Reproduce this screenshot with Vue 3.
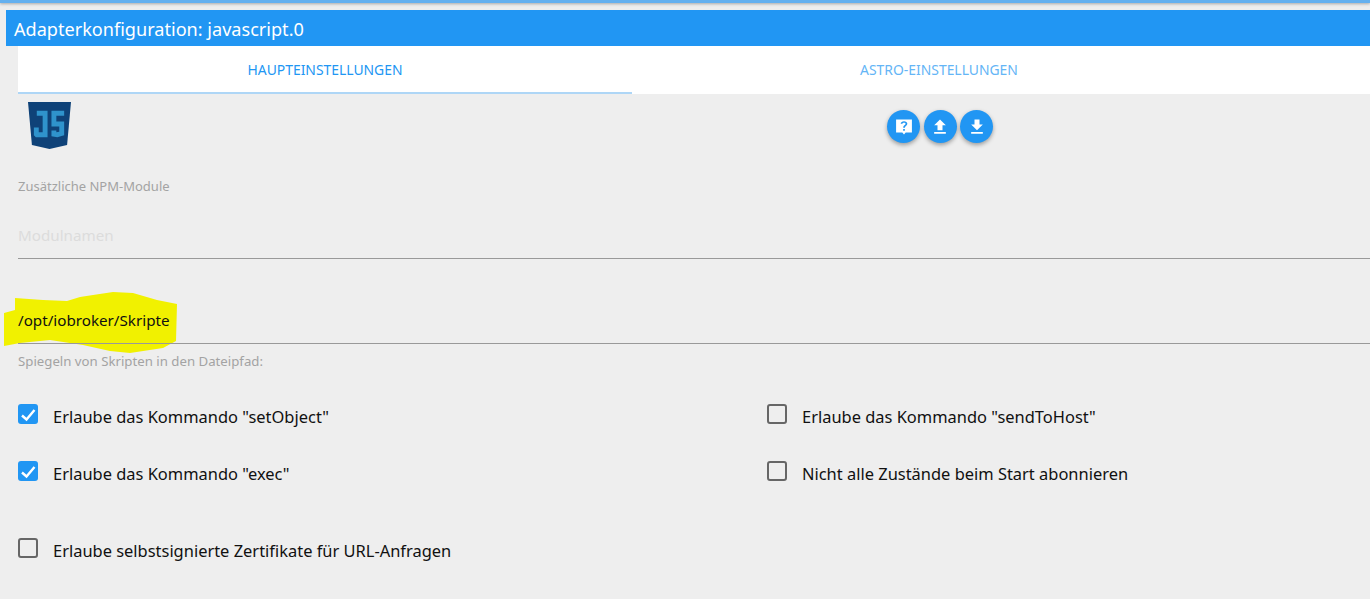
<script setup>
const rows = [
  { left: { text: 'Erlaube das Kommando "setObject"', on: true }, right: { text: 'Erlaube das Kommando "sendToHost"', on: false } },
  { left: { text: 'Erlaube das Kommando "exec"', on: true }, right: { text: 'Nicht alle Zustände beim Start abonnieren', on: false } },
]
</script>

<template>
  <div class="page">
    <div class="topbar"></div>
    <header class="title">Adapterkonfiguration: javascript.0</header>
    <main class="content">
      <nav class="tabs">
        <div class="tab active">HAUPTEINSTELLUNGEN</div>
        <div class="tab">ASTRO-EINSTELLUNGEN</div>
      </nav>
      <section class="logo-row">
        <svg class="logo" viewBox="0 0 44 49" width="43" height="48">
          <path d="M0 0H44L40 44L22 48L4 44Z" fill="#0f4278" />
          <path d="M9 9H20V36H8L6 34V26H11V31H15V14H9Z" fill="#2f93cc" />
          <path d="M24 9H37V14H29V20H37V34L30 36L24 35V29H29V31L32 30.500V25H24Z" fill="#2f93cc" />
        </svg>
        <div class="fabs">
          <button class="fab">
            <svg viewBox="0 0 24 24" width="24" height="24"><path fill="#fff" fill-rule="evenodd" d="M2.500 3h19v15.500H14L12 21l-2-2.500H2.500zM11 14.500v2h2v-2zM12 5c-2.200 0-3.800 1.300-4 3.200h2c.1-.9.9-1.400 2-1.400s1.900.6 1.900 1.400c0 1.600-2.900 1.800-2.900 4.800h2c0-2.300 3-2.500 3-4.900C16 6.200 14.200 5 12 5z"/></svg>
          </button>
          <button class="fab">
            <svg viewBox="0 0 24 24" width="24" height="24"><path fill="#fff" d="M9 16h6v-6h4l-7-7-7 7h4zm-4 2h14v2H5z"/></svg>
          </button>
          <button class="fab">
            <svg viewBox="0 0 24 24" width="24" height="24"><path fill="#fff" d="M19 9h-4V3H9v6H5l7 7zM5 18v2h14v-2z"/></svg>
          </button>
        </div>
      </section>

      <div class="field npm">
        <label class="small">Zusätzliche NPM-Module</label>
        <div class="input placeholder">Modulnamen</div>
      </div>

      <div class="field mirror">
        <svg class="marker" viewBox="0 0 180 62" width="180" height="62">
          <path fill="#f1f100" d="M15 6L43 8L67 9L80 5L93 3L113 0L133 1L157 8L177 12L176 49L163 56L130 61L110 59L83 53L50 48L20 51L4 54L4 21L15 18Z" />
        </svg>
        <div class="input value">/opt/iobroker/Skripte</div>
        <label class="small hint">Spiegeln von Skripten in den Dateipfad:</label>
      </div>

      <div class="options">
        <template v-for="(row, i) in rows" :key="i">
          <div v-for="opt in [row.left, row.right]" :key="opt.text" class="option">
            <span class="box" :class="{ on: opt.on }">
              <svg v-if="opt.on" viewBox="0 0 20 20" width="20" height="20"><path d="M4 11.500l4.500 4 8-9.500" fill="none" stroke="#fff" stroke-width="2.400" /></svg>
            </span>
            <span class="text">{{ opt.text }}</span>
          </div>
        </template>
      </div>
      <div class="option last">
        <span class="box"></span>
        <span class="text">Erlaube selbstsignierte Zertifikate für URL-Anfragen</span>
      </div>
    </main>
  </div>
</template>

<style scoped>
.page {
  width: 1370px;
  height: 599px;
  overflow: hidden;
  background: #eeeeee;
  font-family: "Noto Sans", "Open Sans", sans-serif;
  color: #111;
}
.topbar {
  height: 3px;
  background: #64b0ef;
  box-shadow: 0 1px 3px rgba(0, 0, 0, .3);
}
.title {
  margin: 7px 0 0 6px;
  height: 36px;
  padding-left: 8px;
  background: #2196f3;
  color: #fff;
  font-size: 18.100px;
  line-height: 39px;
}
.content {
  padding-left: 18px;
}
.tabs {
  display: flex;
  height: 48px;
  background: #fff;
}
.tab {
  width: 614px;
  text-align: center;
  font-size: 13.900px;
  line-height: 48px;
  color: #64b5f6;
}
.tab.active {
  color: #2196f3;
  box-shadow: inset 0 -2px 0 #aed6f6;
}
.logo-row {
  display: flex;
  height: 72px;
}
.logo {
  margin: 8px 0 0 10px;
}
.fabs {
  display: flex;
  gap: 3.500px;
  margin: 16px 0 0 816px;
}
.fab {
  width: 33px;
  height: 33px;
  padding: 0;
  border: 0;
  border-radius: 50%;
  display: flex;
  align-items: center;
  justify-content: center;
  background: #2196f3;
  box-shadow: 0 2px 4px rgba(0, 0, 0, .35);
}
.fab svg {
  width: 20px;
  height: 20px;
}
.small {
  display: block;
  font-size: 13px;
  line-height: 16px;
  color: #a3a3a3;
}
.npm {
  padding-top: 12px;
}
.input {
  height: 30px;
  padding-bottom: 8px;
  font-size: 15.200px;
  line-height: 30px;
  border-bottom: 1px solid #999;
}
.npm .input {
  margin-top: 26px;
  color: #dcdcdc;
}
.mirror {
  position: relative;
  margin-top: 46px;
}
.marker {
  position: absolute;
  left: -18px;
  top: -13px;
}
.value {
  position: relative;
  color: #111;
}
.hint {
  position: relative;
  margin-top: 9px;
  font-size: 13.220px;
}
.options {
  display: grid;
  grid-template-columns: 749px 1fr;
  grid-auto-rows: 57px;
  margin-top: 35px;
}
.option {
  display: flex;
  gap: 15px;
  align-items: flex-start;
  font-size: 16.450px;
  line-height: 22px;
}
.option .text {
  padding-top: 2px;
}
.last {
  margin-top: 20px;
}
.box {
  flex: none;
  width: 20px;
  height: 20px;
  box-sizing: border-box;
  border: 2px solid #666;
  border-radius: 3px;
}
.box.on {
  border: 0;
  background: #2196f3;
}
.box svg {
  display: block;
}
</style>
